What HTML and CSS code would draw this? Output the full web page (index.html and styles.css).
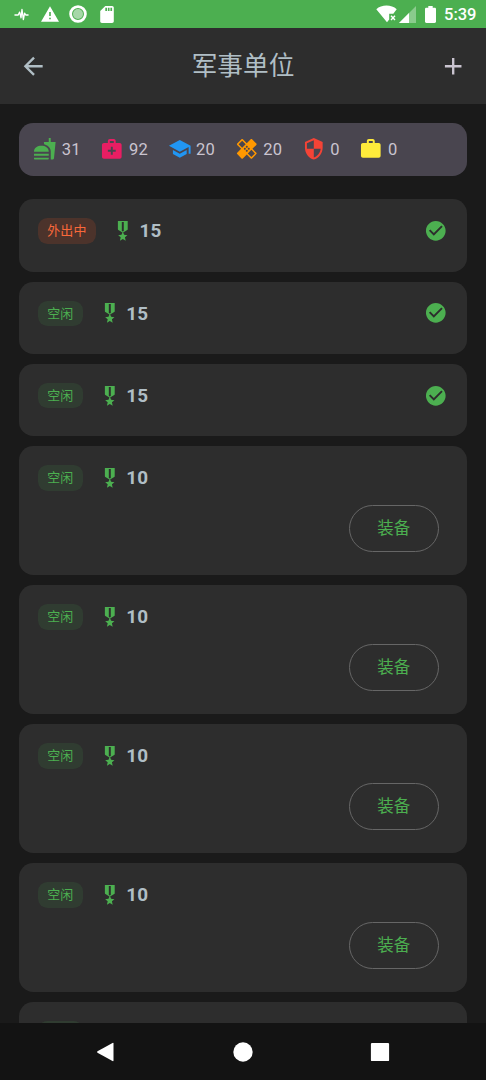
FILE: index.html
```html
<!DOCTYPE html>
<html lang="zh-CN">
<head>
<meta charset="utf-8">
<title>军事单位</title>
<link rel="stylesheet" href="styles.css">
</head>
<body>
<svg class="defs" aria-hidden="true">
  <symbol id="medal" viewBox="0 0 24 24"><path d="M17 10.43V2H7v8.43c0 .35.18.68.49.86l4.18 2.51-.99 2.34-3.41.29 2.59 2.24L9.07 22 12 20.23 14.93 22l-.78-3.33 2.59-2.24-3.41-.29-.99-2.34 4.18-2.51c.3-.18.48-.5.48-.86zm-4 1.8l-1 .6-1-.6V3h2v9.23z"/></symbol>
  <symbol id="check" viewBox="0 0 24 24"><path d="M12 2C6.48 2 2 6.48 2 12s4.48 10 10 10 10-4.48 10-10S17.52 2 12 2zm-2 15l-5-5 1.41-1.41L10 14.17l7.59-7.59L19 8l-9 9z"/></symbol>
</svg>
<div class="screen">
  <div class="status">
    <div class="status-left">
      <svg class="s-pulse" viewBox="0 0 16 16"><path d="M.5 8.500h4L6 5.500l1.500 6L8.500 2.500l1.500 11 1.300-7 1.200 2h3" fill="none" stroke="#fff" stroke-width="1.400" stroke-linejoin="round"/></svg>
      <svg class="s-warn" viewBox="1 2 22 19"><path d="M1 21h22L12 2 1 21zm12-3h-2v-2h2v2zm0-4h-2V9h2v5z"/></svg>
      <svg class="s-ring" viewBox="0 0 18 18"><circle cx="9" cy="9" r="7.400" fill="none" stroke="#fff" stroke-width="2.800"/><circle cx="9" cy="9" r="5" fill="#fff" fill-opacity=".5"/></svg>
      <svg class="s-card" viewBox="4 2 16 20"><path d="M18 2h-8L4.020 8 4 20c0 1.100.9 2 2 2h12c1.100 0 2-.9 2-2V4c0-1.100-.9-2-2-2zm-6 6h-2V4h2v4zm3 0h-2V4h2v4zm3 0h-2V4h2v4z"/></svg>
    </div>
    <div class="status-right">
      <svg class="s-wifi" viewBox="0 0 21 18"><path d="M.3 4.200C5.500-.7 15.500-.7 20.700 4.200L17.300 8.800H13.200V14.500L11 17.200z"/><path d="M15 10.700l4 4.200m0-4.200l-4 4.200" stroke="#fff" stroke-width="1.400"/></svg>
      <svg class="s-signal" viewBox="0 0 17 17"><path d="M0 17L17 0v17z" fill-opacity=".35"/><path d="M0 17L10 7v10z"/></svg>
      <svg class="s-batt" viewBox="7 2 10 20" preserveAspectRatio="none"><path d="M15.670 4H14V2h-4v2H8.330C7.600 4 7 4.600 7 5.330v15.330C7 21.400 7.600 22 8.330 22h7.330c.74 0 1.340-.6 1.340-1.330V5.330C17 4.600 16.400 4 15.670 4z"/></svg>
      <span>5:39</span>
    </div>
  </div>

  <header class="appbar">
    <svg class="nav-icon" viewBox="0 0 24 24"><path d="M20 11H7.830l5.590-5.590L12 4l-8 8 8 8 1.410-1.410L7.830 13H20v-2z"/></svg>
    <h1>军事单位</h1>
    <svg class="nav-icon" viewBox="0 0 24 24"><path d="M19 13h-6v6h-2v-6H5v-2h6V5h2v6h6v2z"/></svg>
  </header>

  <main class="content">
    <div class="resources">
      <div class="resource"><svg class="icon food" viewBox="0 0 24 24"><path d="M18.060 22.990h1.660c.84 0 1.530-.64 1.630-1.460L23 5.050h-5V1h-1.970v4.050h-4.970l.3 2.340c1.710.47 3.310 1.320 4.270 2.260 1.440 1.420 2.430 2.890 2.430 5.290v8.050zM1 21.990V21h15.030v.99c0 .55-.45 1-1.010 1H2.010c-.56 0-1.010-.45-1.010-1zm15.030-7c0-8-15.030-8-15.030 0h15.030zM1.020 17h15v2h-15z"/></svg><span>31</span></div>
      <div class="resource"><svg class="icon medical" viewBox="0 0 24 24"><path d="M20 6h-4V4c0-1.100-.9-2-2-2h-4c-1.100 0-2 .9-2 2v2H4c-1.100 0-2 .9-2 2v12c0 1.100.9 2 2 2h16c1.100 0 2-.9 2-2V8c0-1.100-.9-2-2-2zM10 4h4v2h-4V4zm6 11h-3v3h-2v-3H8v-2h3v-3h2v3h3v2z"/></svg><span>92</span></div>
      <div class="resource"><svg class="icon school" viewBox="0 0 24 24"><path d="M5 13.180v4L12 21l7-3.820v-4L12 17l-7-3.820zM12 3L1 9l11 6 9-4.910V17h2V9L12 3z"/></svg><span>20</span></div>
      <div class="resource"><svg class="icon healing" viewBox="0 0 24 24"><path d="M17.730 12.020l3.980-3.980c.39-.39.39-1.020 0-1.410l-4.340-4.340c-.39-.39-1.020-.39-1.410 0l-3.980 3.980L8 2.290C7.800 2.100 7.550 2 7.290 2c-.25 0-.51.1-.7.290L2.250 6.630c-.39.39-.39 1.020 0 1.410l3.980 3.980L2.250 16c-.39.39-.39 1.020 0 1.410l4.340 4.340c.39.39 1.020.39 1.410 0l3.980-3.980 3.980 3.980c.2.2.45.29.71.29.26 0 .51-.1.71-.29l4.340-4.340c.39-.39.39-1.020 0-1.410l-3.990-3.980zM12 9c.55 0 1 .45 1 1s-.45 1-1 1-1-.45-1-1 .45-1 1-1zm-4.710 1.960L3.660 7.340l3.630-3.630 3.620 3.620-3.620 3.630zM10 13c-.55 0-1-.45-1-1s.45-1 1-1 1 .45 1 1-.45 1-1 1zm2 2c-.55 0-1-.45-1-1s.45-1 1-1 1 .45 1 1-.45 1-1 1zm2-4c.55 0 1 .45 1 1s-.45 1-1 1-1-.45-1-1 .45-1 1-1zm2.660 9.340l-3.630-3.620 3.630-3.630 3.620 3.620-3.620 3.630z"/></svg><span>20</span></div>
      <div class="resource"><svg class="icon security" viewBox="0 0 24 24"><path d="M12 1L3 5v6c0 5.550 3.840 10.740 9 12 5.160-1.260 9-6.450 9-12V5l-9-4zm0 10.990h7c-.53 4.120-3.280 7.790-7 8.940V12H5V6.300l7-3.110v8.800z"/></svg><span>0</span></div>
      <div class="resource"><svg class="icon work" viewBox="0 0 24 24"><path d="M20 6h-4V4c0-1.110-.89-2-2-2h-4c-1.110 0-2 .89-2 2v2H4c-1.110 0-1.990.89-1.990 2L2 19c0 1.110.89 2 2 2h16c1.110 0 2-.89 2-2V8c0-1.110-.89-2-2-2zm-6 0h-4V4h4v2z"/></svg><span>0</span></div>
    </div>

    <div class="units">
      <section class="unit"><div class="unit-row"><span class="chip away">外出中</span><svg class="icon green"><use href="#medal"/></svg><b>15</b><svg class="icon green done"><use href="#check"/></svg></div></section>
      <section class="unit"><div class="unit-row"><span class="chip">空闲</span><svg class="icon green"><use href="#medal"/></svg><b>15</b><svg class="icon green done"><use href="#check"/></svg></div></section>
      <section class="unit"><div class="unit-row"><span class="chip">空闲</span><svg class="icon green"><use href="#medal"/></svg><b>15</b><svg class="icon green done"><use href="#check"/></svg></div></section>
      <section class="unit tall"><div class="unit-row"><span class="chip">空闲</span><svg class="icon green"><use href="#medal"/></svg><b>10</b></div><button class="equip">装备</button></section>
      <section class="unit tall"><div class="unit-row"><span class="chip">空闲</span><svg class="icon green"><use href="#medal"/></svg><b>10</b></div><button class="equip">装备</button></section>
      <section class="unit tall"><div class="unit-row"><span class="chip">空闲</span><svg class="icon green"><use href="#medal"/></svg><b>10</b></div><button class="equip">装备</button></section>
      <section class="unit tall"><div class="unit-row"><span class="chip">空闲</span><svg class="icon green"><use href="#medal"/></svg><b>10</b></div><button class="equip">装备</button></section>
      <section class="unit tall"><div class="unit-row"><span class="chip empty"></span></div></section>
    </div>
  </main>

  <nav class="sysnav">
    <svg viewBox="0 0 20 20"><path d="M17.500 1.500v17q0 1-1 .5L1.500 10.800q-1-.8 0-1.600L16.500 1q1-.5 1 .5z"/></svg>
    <svg viewBox="0 0 20 20"><circle cx="10" cy="10" r="9.700"/></svg>
    <svg viewBox="0 0 20 20"><rect x=".9" y=".9" width="18.200" height="18.200" rx="1.200"/></svg>
  </nav>
</div>
</body>
</html>
```

FILE: styles.css
```css
* { box-sizing: border-box; }
body { margin: 0; background: #1a1a1a; }
svg { display: block; flex: none; fill: currentColor; }
.defs { display: none; }

.screen {
  width: 486px;
  height: 1080px;
  display: flex;
  flex-direction: column;
  overflow: hidden;
  color: #b0bec5;
  font-family: Roboto, "Noto Sans CJK SC", sans-serif;
}

.status {
  height: 28px;
  flex: none;
  display: flex;
  justify-content: space-between;
  padding: 0 9.500px 0 14px;
  background: #4caf50;
  color: #fff;
}
.status-left, .status-right { display: flex; align-items: center; }
.s-pulse { width: 15px; height: 15px; }
.s-warn { width: 18px; height: 16px; margin-left: 11.500px; }
.s-ring { width: 18px; height: 18px; margin-left: 10.500px; }
.s-card { width: 14px; height: 17px; margin-left: 12.500px; }
.s-wifi { width: 21px; height: 18px; }
.s-signal { width: 17px; height: 17px; margin-left: 2px; margin-top: 1px; }
.s-batt { width: 11px; height: 17px; margin-left: 9px; }
.status-right span {
  margin-left: 8.500px;
  padding-top: 2px;
  font-size: 16.500px;
  font-weight: 500;
  line-height: 20px;
}

.appbar {
  height: 76px;
  flex: none;
  display: flex;
  align-items: center;
  justify-content: space-between;
  padding: 0 19px;
  background: #2d2d2d;
}
.appbar h1 {
  margin: 0;
  font-size: 25.700px;
  font-weight: 400;
  line-height: 34px;
}
.nav-icon { width: 28.400px; height: 28.400px; }
.nav-icon:last-child { color: #cac4d0; }

.content {
  flex: 1;
  min-height: 0;
  overflow: hidden;
  padding: 19px 18.900px 0;
}

.resources {
  height: 52.500px;
  display: flex;
  align-items: center;
  gap: 19.500px;
  padding: 0 14.400px;
  border-radius: 14.200px;
  background: #49454f;
  color: #cac4d0;
  font-size: 16.500px;
  letter-spacing: .3px;
}
.resource { display: flex; align-items: center; gap: 4.900px; }
.icon { width: 23.600px; height: 23.600px; }
.food, .green { color: #4caf50; }
.medical { color: #e91e63; }
.school { color: #2196f3; }
.healing { color: #ff9800; }
.security { color: #f44336; }
.work { color: #ffeb3b; }

.units {
  display: flex;
  flex-direction: column;
  gap: 9.900px;
  margin-top: 23.900px;
}
.unit {
  height: 72.450px;
  flex: none;
  padding: 18.900px;
  border-radius: 14.200px;
  background: #2d2d2d;
}
.unit.tall { height: 129.100px; }
.unit-row { height: 25.300px; display: flex; align-items: center; }
.unit-row b { margin-left: 5px; font-size: 18.900px; letter-spacing: .1px; }
.chip {
  height: 25.300px;
  margin-right: 14.900px;
  padding: 0 9.450px;
  border-radius: 9.450px;
  background: rgba(76, 175, 80, .12);
  color: #4caf50;
  font-size: 13px;
  line-height: 26px;
  letter-spacing: .1px;
}
.chip.away { background: rgba(255, 87, 34, .15); color: #f9683a; }
.chip.empty { width: 45px; }
.done { margin-left: auto; margin-right: .7px; }

.equip {
  display: block;
  width: 90px;
  height: 47.200px;
  margin: 14.200px 9.400px 0 auto;
  padding: 1px 0 0;
  border: 1px solid #666;
  border-radius: 23.600px;
  background: transparent;
  color: #4caf50;
  font: 400 16.500px/24px Roboto, "Noto Sans CJK SC", sans-serif;
}

.sysnav {
  height: 57px;
  flex: none;
  display: grid;
  grid-template-columns: repeat(3, 137px);
  justify-content: center;
  justify-items: center;
  align-items: center;
  background: #131313;
  color: #fff;
}
.sysnav svg { width: 20px; height: 20px; }
```
